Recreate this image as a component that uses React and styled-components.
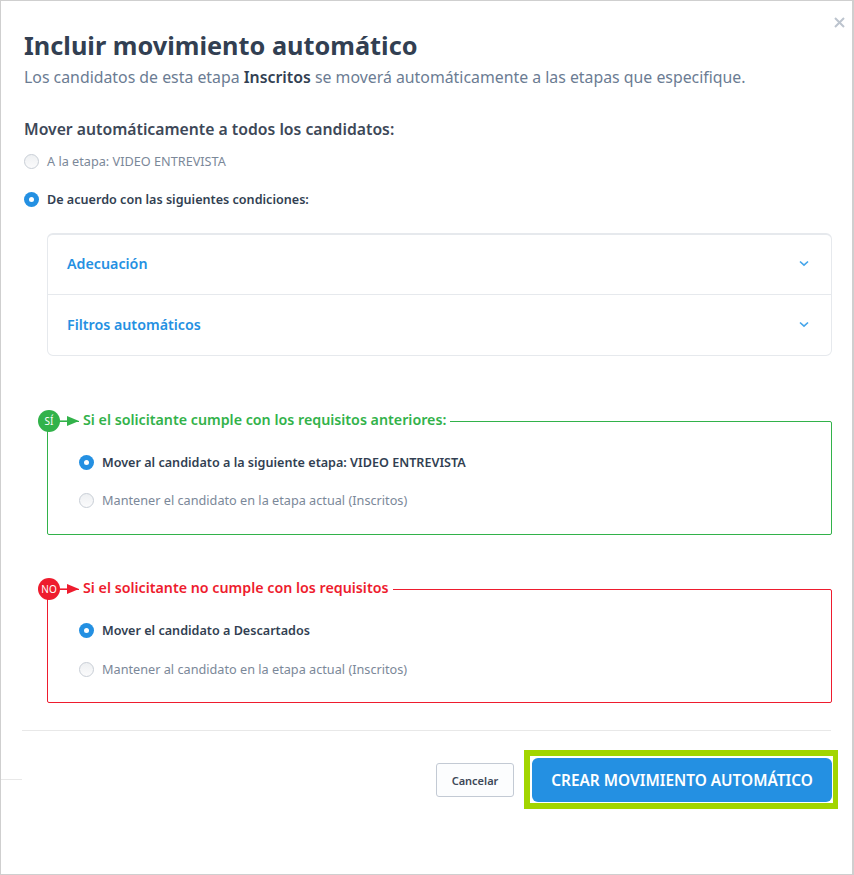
import React from "react";
import styled, { createGlobalStyle } from "styled-components";

const FONT = '"Noto Sans", "Open Sans", sans-serif';
const GREEN = "#32b24a";
const RED = "#ee1c2e";

const Global = createGlobalStyle`
  html, body { margin: 0; padding: 0; background: #fff; }
  body { font-family: ${FONT}; color: #323f52; }
  * { box-sizing: border-box; }
`;

const Modal = styled.div`
  position: relative;
  width: 854px;
  height: 875px;
  background: #fff;
  border: 1px solid #cfcfcf;
  border-right-width: 2px;
  padding: 29px 21px 0 23px;
`;

const Close = styled.svg`
  position: absolute;
  top: 16px;
  right: 7px;
  width: 11px;
  height: 11px;
`;

const Title = styled.h1`
  margin: 0;
  font-size: 25.3px;
  line-height: 30px;
  font-weight: 700;
  color: #323f52;
`;

const Lead = styled.p`
  margin: 5px 0 0;
  font-size: 15.85px;
  line-height: 24px;
  color: #6b7c93;
  strong { color: #323f52; font-weight: 600; }
`;

const SectionLabel = styled.h2`
  margin: 28px 0 0;
  font-size: 15.75px;
  line-height: 24px;
  font-weight: 600;
  color: #3d4858;
`;

const Option = styled.label`
  display: flex;
  align-items: center;
  gap: 8px;
  height: 20px;
  margin-top: ${(p) => p.$top}px;
  font-size: ${(p) => (p.$on ? 12.6 : 12.7)}px;
  font-weight: ${(p) => (p.$on ? 600 : 400)};
  color: ${(p) => (p.$on ? "#323f52" : "#7b8899")};
`;

const Radio = styled.span`
  flex: none;
  width: 15px;
  height: 15px;
  border-radius: 50%;
  ${(p) =>
    p.$on
      ? "background:#2490e2; display:flex; align-items:center; justify-content:center; &::after{content:''; width:5px; height:5px; border-radius:50%; background:#fff;}"
      : "background:linear-gradient(#eef0f2,#fbfbfc); border:1px solid #c8ced6;"}
`;

const Accordion = styled.div`
  margin: 24px 0 0 23px;
  width: 785px;
  border: 1px solid #e6e9ed;
  border-top-width: 2px;
  border-radius: 6px;
`;

const AccordionRow = styled.div`
  height: ${(p) => p.$h}px;
  padding: 0 22px 2px 19px;
  display: flex;
  align-items: center;
  justify-content: space-between;
  font-size: 14.25px;
  font-weight: 600;
  color: #2490e2;
  & + & { border-top: 1px solid #e6e9ed; }
`;

const Chevron = styled.svg`
  width: 10px;
  height: 7px;
`;

const Decision = styled.section`
  position: relative;
  padding: 0 0 0 31px;
  width: 785px;
  height: 114px;
  color: ${(p) => p.$color};
  border-width: 1px;
  border-style: solid;
  border-color: currentColor;
  border-radius: 2px;
`;

const DecisionSlot = styled.div`
  margin: ${(p) => p.$top}px 0 0 23px;
`;

const Legend = styled.h3`
  position: absolute;
  left: 31px;
  top: -12px;
  margin: 0;
  padding: 0 4px;
  background: #fff;
  font-size: 14.25px;
  line-height: 20px;
  font-weight: 600;
  color: inherit;
`;

const Badge = styled.span`
  position: absolute;
  left: -10px;
  top: -12px;
  width: 22px;
  height: 22px;
  border-radius: 50%;
  background: currentColor;
  display: flex;
  align-items: center;
  justify-content: center;
`;

const BadgeText = styled.span`
  color: #fff;
  font-size: 10px;
`;

const Arrow = styled.svg`
  position: absolute;
  left: 12px;
  top: -6px;
  width: 20px;
  height: 10px;
`;

const Divider = styled.hr`
  margin: 27px 0 0 -2px;
  width: 809px;
  height: 1px;
  border: 0;
  background: #e8e8e8;
`;

const Footer = styled.div`
  display: flex;
  justify-content: flex-end;
  align-items: center;
  gap: 10px;
  margin: 19px -7px 0 0;
`;

const CancelButton = styled.button`
  width: 78px;
  height: 34px;
  padding: 1px 0 0;
  background: #fcfdfe;
  border: 1px solid #c3cad4;
  border-radius: 3px;
  font: 600 11px ${FONT};
  color: #3d4858;
`;

const Highlight = styled.div`
  border: 6px solid #a2d500;
  border-right-width: 5px;
  padding: 2px 1px 1px 2px;
  background: #fff;
`;

const PrimaryButton = styled.button`
  display: block;
  width: 300px;
  height: 44px;
  padding: 1px 0 0;
  background: #2490e2;
  border: 0;
  border-radius: 6px;
  color: #fff;
  font: 600 15.4px ${FONT};
`;

const Scar = styled.span`
  position: absolute;
  left: 0;
  top: 778px;
  width: 21px;
  height: 1px;
  background: #e8e8e8;
`;

const Check = ({ top, on, children }) => (
  <Option $top={top} $on={on}>
    <Radio $on={on} />
    {children}
  </Option>
);

const Down = () => (
  <Chevron viewBox="0 0 10 7">
    <path d="M1 1.5 5 5.2 9 1.5" fill="none" stroke="#45a5ea" strokeWidth="1.6" />
  </Chevron>
);

const Branch = ({ color, top, badge, title, children }) => (
  <DecisionSlot $top={top}>
    <Decision $color={color}>
      <Legend>{title}</Legend>
      <Badge><BadgeText>{badge}</BadgeText></Badge>
      <Arrow viewBox="0 0 20 10">
        <path d="M0 5h9" stroke="currentColor" strokeWidth="1.2" />
        <path d="M7 0l12 5-12 5z" fill="currentColor" />
      </Arrow>
      {children}
    </Decision>
  </DecisionSlot>
);

export default function App() {
  return (
    <>
      <Global />
      <Modal>
        <Close viewBox="0 0 11 11">
          <path d="M1 1l9 9M10 1l-9 9" stroke="#bcc4ce" strokeWidth="2" />
        </Close>
        <Title>Incluir movimiento automático</Title>
        <Lead>
          Los candidatos de esta etapa <strong>Inscritos</strong> se moverá automáticamente a las etapas que especifique.
        </Lead>
        <SectionLabel>Mover automáticamente a todos los candidatos:</SectionLabel>
        <Check top={10}>A la etapa: VIDEO ENTREVISTA</Check>
        <Check top={18} on>De acuerdo con las siguientes condiciones:</Check>
        <Accordion>
          <AccordionRow $h={59}>Adecuación<Down /></AccordionRow>
          <AccordionRow $h={61}>Filtros automáticos<Down /></AccordionRow>
        </Accordion>
        <Branch color={GREEN} top={65} badge="SÍ" title="Si el solicitante cumple con los requisitos anteriores:">
          <Check top={30} on>Mover al candidato a la siguiente etapa: VIDEO ENTREVISTA</Check>
          <Check top={18}>Mantener el candidato en la etapa actual (Inscritos)</Check>
        </Branch>
        <Branch color={RED} top={54} badge="NO" title="Si el solicitante no cumple con los requisitos">
          <Check top={30} on>Mover el candidato a Descartados</Check>
          <Check top={19}>Mantener al candidato en la etapa actual (Inscritos)</Check>
        </Branch>
        <Divider />
        <Footer>
          <CancelButton>Cancelar</CancelButton>
          <Highlight>
            <PrimaryButton>CREAR MOVIMIENTO AUTOMÁTICO</PrimaryButton>
          </Highlight>
        </Footer>
        <Scar />
      </Modal>
    </>
  );
}
